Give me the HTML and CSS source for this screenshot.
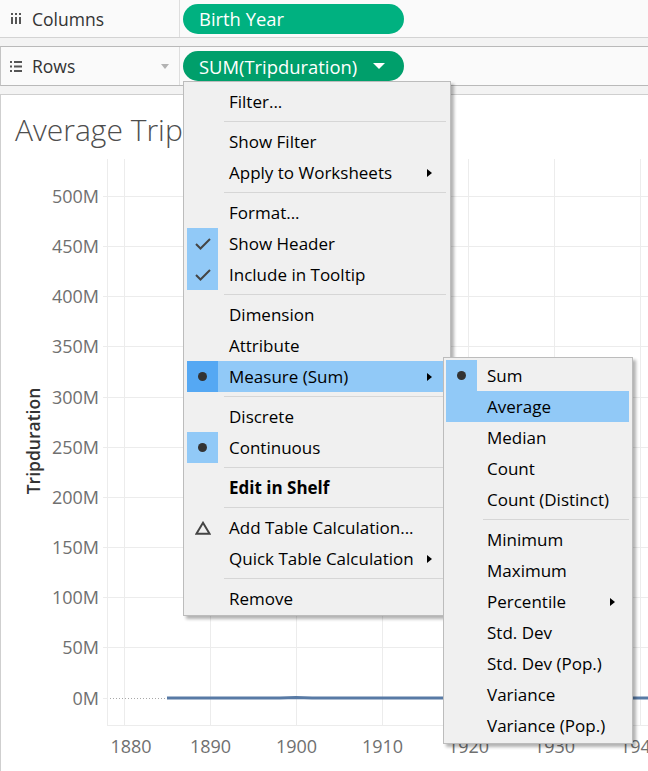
FILE: index.html
```html
<!DOCTYPE html>
<html>
<head>
<meta charset="utf-8">
<link rel="stylesheet" href="styles.css">
</head>
<body>
<div class="shelf shelf-cols">
  <div class="shelf-label">
    <svg class="shelf-icon" width="12" height="12" viewBox="0 0 12 12">
      <rect x="1" y="0" width="2" height="2" fill="#555"/>
      <rect x="5" y="0" width="2" height="2" fill="#555"/>
      <rect x="9" y="0" width="2" height="2" fill="#555"/>
      <rect x="1" y="4" width="2" height="7" fill="#555"/>
      <rect x="5" y="4" width="2" height="7" fill="#555"/>
      <rect x="9" y="4" width="2" height="7" fill="#555"/>
    </svg>
    <span>Columns</span>
  </div>
  <div class="shelf-body">
    <div class="pill pill-dim">Birth Year</div>
  </div>
</div>

<div class="shelf shelf-rows">
  <div class="shelf-label">
    <svg class="shelf-icon" width="12" height="12" viewBox="0 0 12 12">
      <rect x="0" y="1" width="2" height="2" fill="#555"/>
      <rect x="4" y="1" width="8" height="2" fill="#555"/>
      <rect x="0" y="5.5" width="2" height="2" fill="#555"/>
      <rect x="4" y="5.5" width="8" height="2" fill="#555"/>
      <rect x="0" y="10" width="2" height="2" fill="#555"/>
      <rect x="4" y="10" width="8" height="2" fill="#555"/>
    </svg>
    <span>Rows</span>
    <i class="shelf-caret"></i>
  </div>
  <div class="shelf-body">
    <div class="pill pill-meas">SUM(Tripduration)<i class="pill-caret"></i></div>
  </div>
</div>

<div class="pane">
  <div class="title">Average Tripduration</div>
  <svg class="chart" width="647" height="614" viewBox="1 157 647 614">
    <g class="grid">
      <line x1="103" y1="196.5" x2="648" y2="196.5"/>
      <line x1="103" y1="246.5" x2="648" y2="246.5"/>
      <line x1="103" y1="296.5" x2="648" y2="296.5"/>
      <line x1="103" y1="346.5" x2="648" y2="346.5"/>
      <line x1="103" y1="397.5" x2="648" y2="397.5"/>
      <line x1="103" y1="447.5" x2="648" y2="447.5"/>
      <line x1="103" y1="497.5" x2="648" y2="497.5"/>
      <line x1="103" y1="547.5" x2="648" y2="547.5"/>
      <line x1="103" y1="597.5" x2="648" y2="597.5"/>
      <line x1="103" y1="647.5" x2="648" y2="647.5"/>
      <line x1="103" y1="698.5" x2="108" y2="698.5"/>
      <line x1="107.5" y1="159" x2="107.5" y2="726"/>
      <line x1="124.5" y1="159" x2="124.5" y2="726"/>
      <line x1="210.5" y1="159" x2="210.5" y2="726"/>
      <line x1="296.5" y1="159" x2="296.5" y2="726"/>
      <line x1="382.5" y1="159" x2="382.5" y2="726"/>
      <line x1="468.5" y1="159" x2="468.5" y2="726"/>
      <line x1="554.5" y1="159" x2="554.5" y2="726"/>
      <line x1="640.5" y1="159" x2="640.5" y2="726"/>
      <line x1="107" y1="725.5" x2="648" y2="725.5"/>
    </g>
    <line class="zero" x1="110" y1="698.5" x2="167" y2="698.5"/>
    <polyline class="trend" points="167,698 280,698 296,697.5 312,698 648,698"/>
    <g class="ylab">
      <text x="99" y="203">500M</text>
      <text x="99" y="253">450M</text>
      <text x="99" y="303">400M</text>
      <text x="99" y="353">350M</text>
      <text x="99" y="404">300M</text>
      <text x="99" y="454">250M</text>
      <text x="99" y="504">200M</text>
      <text x="99" y="554">150M</text>
      <text x="99" y="604">100M</text>
      <text x="99" y="654">50M</text>
      <text x="99" y="705">0M</text>
    </g>
    <g class="xlab">
      <text x="131" y="753">1880</text>
      <text x="210.5" y="753">1890</text>
      <text x="296.5" y="753">1900</text>
      <text x="382.5" y="753">1910</text>
      <text x="468.5" y="753">1920</text>
      <text x="554.5" y="753">1930</text>
      <text x="640.5" y="753">1940</text>
    </g>
    <text class="axis-title" transform="translate(33,441) rotate(-90)">Tripduration</text>
  </svg>
</div>

<div class="menu menu-main">
  <div class="item"><span class="icon"></span><span class="label">Filter...</span></div>
  <div class="sep"></div>
  <div class="item"><span class="icon"></span><span class="label">Show Filter</span></div>
  <div class="item"><span class="icon"></span><span class="label">Apply to Worksheets</span><i class="arrow"></i></div>
  <div class="sep"></div>
  <div class="item"><span class="icon"></span><span class="label">Format...</span></div>
  <div class="item"><span class="icon on"><svg width="16" height="12" viewBox="0 0 16 12"><path d="M1 6 L5.5 10.5 L15 1" fill="none" stroke="#454545" stroke-width="2"/></svg></span><span class="label">Show Header</span></div>
  <div class="item"><span class="icon on"><svg width="16" height="12" viewBox="0 0 16 12"><path d="M1 6 L5.5 10.5 L15 1" fill="none" stroke="#454545" stroke-width="2"/></svg></span><span class="label">Include in Tooltip</span></div>
  <div class="sep"></div>
  <div class="item"><span class="icon"></span><span class="label">Dimension</span></div>
  <div class="item"><span class="icon"></span><span class="label">Attribute</span></div>
  <div class="item hl"><span class="icon dark"><i class="dot"></i></span><span class="label">Measure (Sum)</span><i class="arrow"></i></div>
  <div class="sep"></div>
  <div class="item"><span class="icon"></span><span class="label">Discrete</span></div>
  <div class="item"><span class="icon on"><i class="dot"></i></span><span class="label">Continuous</span></div>
  <div class="sep"></div>
  <div class="item"><span class="icon"></span><span class="label bold">Edit in Shelf</span></div>
  <div class="sep"></div>
  <div class="item"><span class="icon"><svg width="16" height="14" viewBox="0 0 16 14"><path d="M8 1.8 L14.6 12.8 L1.4 12.8 Z" fill="none" stroke="#444" stroke-width="2" stroke-linejoin="miter"/></svg></span><span class="label">Add Table Calculation...</span></div>
  <div class="item"><span class="icon"></span><span class="label">Quick Table Calculation</span><i class="arrow"></i></div>
  <div class="sep"></div>
  <div class="item"><span class="icon"></span><span class="label">Remove</span></div>
</div>

<div class="menu menu-sub">
  <div class="item"><span class="icon on"><i class="dot"></i></span><span class="label">Sum</span></div>
  <div class="item hl"><span class="icon"></span><span class="label">Average</span></div>
  <div class="item"><span class="icon"></span><span class="label">Median</span></div>
  <div class="item"><span class="icon"></span><span class="label">Count</span></div>
  <div class="item"><span class="icon"></span><span class="label">Count (Distinct)</span></div>
  <div class="sep"></div>
  <div class="item"><span class="icon"></span><span class="label">Minimum</span></div>
  <div class="item"><span class="icon"></span><span class="label">Maximum</span></div>
  <div class="item"><span class="icon"></span><span class="label">Percentile</span><i class="arrow"></i></div>
  <div class="item"><span class="icon"></span><span class="label">Std. Dev</span></div>
  <div class="item"><span class="icon"></span><span class="label">Std. Dev (Pop.)</span></div>
  <div class="item"><span class="icon"></span><span class="label">Variance</span></div>
  <div class="item"><span class="icon"></span><span class="label">Variance (Pop.)</span></div>
</div>
</body>
</html>
```

FILE: styles.css
```css
html, body {
  margin: 0;
  padding: 0;
}
body {
  width: 648px;
  height: 771px;
  overflow: hidden;
  position: relative;
  background: #f3f3f3;
  font-family: "Open Sans", "Noto Sans", sans-serif;
}

/* shelves */
.shelf {
  display: flex;
  background: #fafafa;
}
.shelf-cols {
  height: 37px;
  border-bottom: 1px solid #d3d3d3;
}
.shelf-rows {
  height: 38px;
  margin-top: 8px;
  border-top: 1px solid #b9b9b9;
  border-bottom: 1px solid #b9b9b9;
  border-left: 1px solid #c4c4c4;
}
.shelf-label {
  display: flex;
  align-items: center;
  border-right: 1px solid #dedede;
  color: #333;
  font-size: 17.5px;
}
.shelf-cols .shelf-label {
  width: 179px;
}
.shelf-rows .shelf-label {
  width: 178px;
}
.shelf-icon {
  display: block;
  margin-left: 10px;
  margin-right: 10px;
  flex: none;
}
.shelf-rows .shelf-icon {
  margin-left: 9px;
}
.shelf-caret {
  margin-left: auto;
  margin-right: 10px;
  width: 0;
  height: 0;
  border-left: 4px solid transparent;
  border-right: 4px solid transparent;
  border-top: 5px solid #b3b3b3;
}
.shelf-body {
  display: flex;
  align-items: center;
  padding-left: 3px;
}
.pill {
  width: 221px;
  height: 30px;
  box-sizing: border-box;
  border-radius: 15px;
  padding-left: 16px;
  display: flex;
  align-items: center;
  color: #fff;
  font-size: 18.4px;
  white-space: nowrap;
}
.pill-dim {
  background: #00b180;
}
.pill-meas {
  background: #009f6b;
}
.pill-caret {
  margin-left: auto;
  margin-right: 19px;
  width: 0;
  height: 0;
  border-left: 6px solid transparent;
  border-right: 6px solid transparent;
  border-top: 6px solid #fff;
}

/* chart pane */
.pane {
  margin-top: 8px;
  height: 676px;
  background: #fff;
  border-top: 1px solid #cfcfcf;
  border-left: 1px solid #cfcfcf;
}
.title {
  height: 62px;
  box-sizing: border-box;
  padding: 20px 0 0 14px;
  font-size: 30px;
  line-height: 30px;
  font-weight: 300;
  color: #4d4d4d;
  white-space: nowrap;
}
.chart {
  display: block;
}
.grid line {
  stroke: #ececec;
  stroke-width: 1;
}
.zero {
  stroke: #a8a8a8;
  stroke-width: 1;
  stroke-dasharray: 1 2;
}
.trend {
  fill: none;
  stroke: #587aa5;
  stroke-width: 3;
}
.ylab text {
  font-family: "Open Sans", "Noto Sans", sans-serif;
  font-size: 18px;
  fill: #707070;
  text-anchor: end;
}
.xlab text {
  font-family: "Open Sans", "Noto Sans", sans-serif;
  font-size: 18px;
  fill: #707070;
  text-anchor: middle;
}
.axis-title {
  font-family: "Open Sans", "Noto Sans", sans-serif;
  font-size: 17.5px;
  font-weight: 600;
  fill: #333;
  text-anchor: middle;
  dominant-baseline: central;
}

/* menus */
.menu {
  position: absolute;
  background: #f0f0f0;
  border: 1px solid #bcbcbc;
  box-shadow: 3px 3px 3px rgba(0, 0, 0, 0.3);
  font-size: 17px;
  color: #000;
}
.menu-main {
  left: 183px;
  top: 81px;
  width: 260px;
  padding: 4px 3px 1px 3px;
}
.menu-sub {
  left: 443px;
  top: 357px;
  width: 183px;
  padding: 2px 3px 2px 2px;
}
.item {
  display: flex;
  align-items: center;
  height: 31px;
  white-space: nowrap;
}
.item.hl {
  background: #91c9f7;
}
.icon {
  width: 31px;
  height: 31px;
  flex: none;
  display: flex;
  align-items: center;
  justify-content: center;
}
.icon.on {
  background: #91c9f7;
}
.icon.dark {
  background: #55a8f3;
}
.icon svg {
  display: block;
}
.dot {
  width: 9px;
  height: 9px;
  border-radius: 50%;
  background: #333;
}
.label {
  padding-left: 11px;
}
.menu-sub .label {
  padding-left: 10px;
}
.bold {
  font-weight: 700;
}
.arrow {
  margin-left: auto;
  margin-right: 15px;
  width: 0;
  height: 0;
  border-top: 4px solid transparent;
  border-bottom: 4px solid transparent;
  border-left: 5px solid #000;
}
.menu-sub .arrow {
  margin-right: 14px;
}
.sep {
  height: 1px;
  background: #d6d6d6;
  margin: 4px 1px 4px 37px;
}
.menu-sub .sep {
  margin-right: 0;
}
```
